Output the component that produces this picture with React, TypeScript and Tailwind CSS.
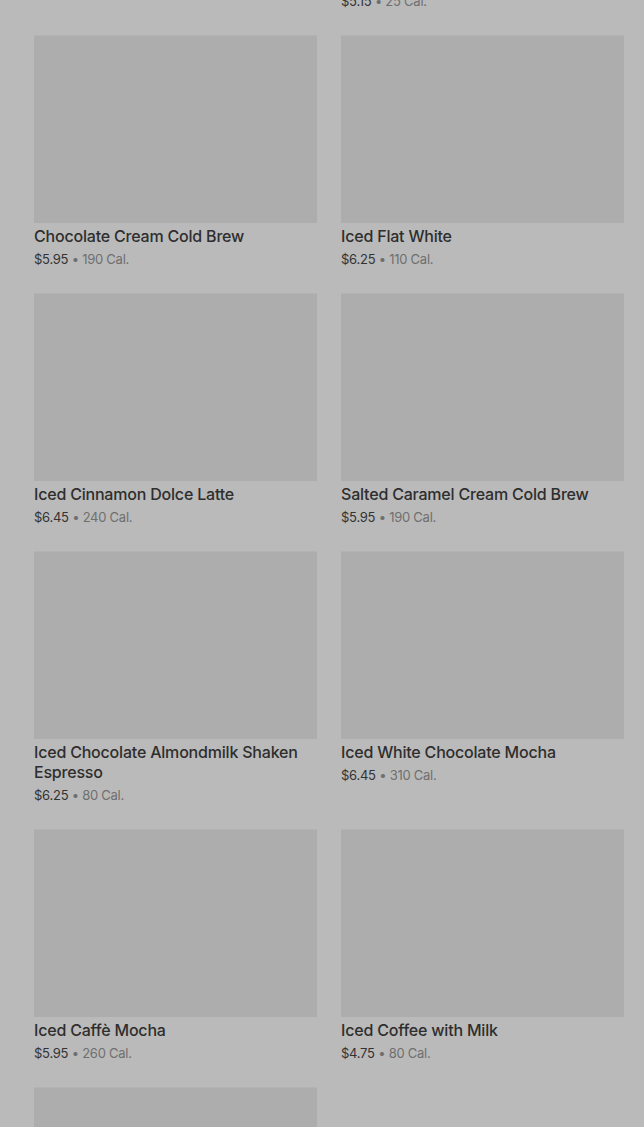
type Item = {
    name: string;
    price?: string;
    cal?: string;
};

const items: Item[] = [
    { name: 'Iced Caffè Americano' },
    { name: 'Iced Espresso', price: '$5.15', cal: '25 Cal.' },
    { name: 'Chocolate Cream Cold Brew', price: '$5.95', cal: '190 Cal.' },
    { name: 'Iced Flat White', price: '$6.25', cal: '110 Cal.' },
    { name: 'Iced Cinnamon Dolce Latte', price: '$6.45', cal: '240 Cal.' },
    { name: 'Salted Caramel Cream Cold Brew', price: '$5.95', cal: '190 Cal.' },
    { name: 'Iced Chocolate Almondmilk Shaken Espresso', price: '$6.25', cal: '80 Cal.' },
    { name: 'Iced White Chocolate Mocha', price: '$6.45', cal: '310 Cal.' },
    { name: 'Iced Caffè Mocha', price: '$5.95', cal: '260 Cal.' },
    { name: 'Iced Coffee with Milk', price: '$4.75', cal: '80 Cal.' },
    { name: 'Iced Caramel Macchiato', price: '$6.25', cal: '250 Cal.' },
];

function MenuCard({ item }: { item: Item }) {
    return (
        <div className="flex flex-col">
            {/* картинка ещё не загрузилась */}
            <div className="h-[188px] w-full border-t border-[#b3b3b3] bg-[#adadad]" />
            <div className="mt-[3px] text-[16px] font-medium leading-[20px] tracking-[-0.2px] text-[#2e2e2e]">
                {item.name}
            </div>
            {item.price && (
                <div className="mt-[3px] text-[13px] leading-[20px] tracking-[-0.25px] text-[#333333]">
                    {item.price}
                    <span className="text-[#6f6f6f]"> • {item.cal}</span>
                </div>
            )}
        </div>
    );
}

export default function App() {
    return (
        <div
            className="h-[1127px] overflow-hidden bg-[#bababa]"
            style={{ fontFamily: 'Inter, Roboto, "Noto Sans", sans-serif' }}
        >
            <div className="-mt-[223px] grid grid-cols-2 gap-x-[24px] gap-y-[24px] pl-[34px] pr-[20px]">
                {items.map((item) => (
                    <MenuCard key={item.name} item={item} />
                ))}
            </div>
        </div>
    );
}
